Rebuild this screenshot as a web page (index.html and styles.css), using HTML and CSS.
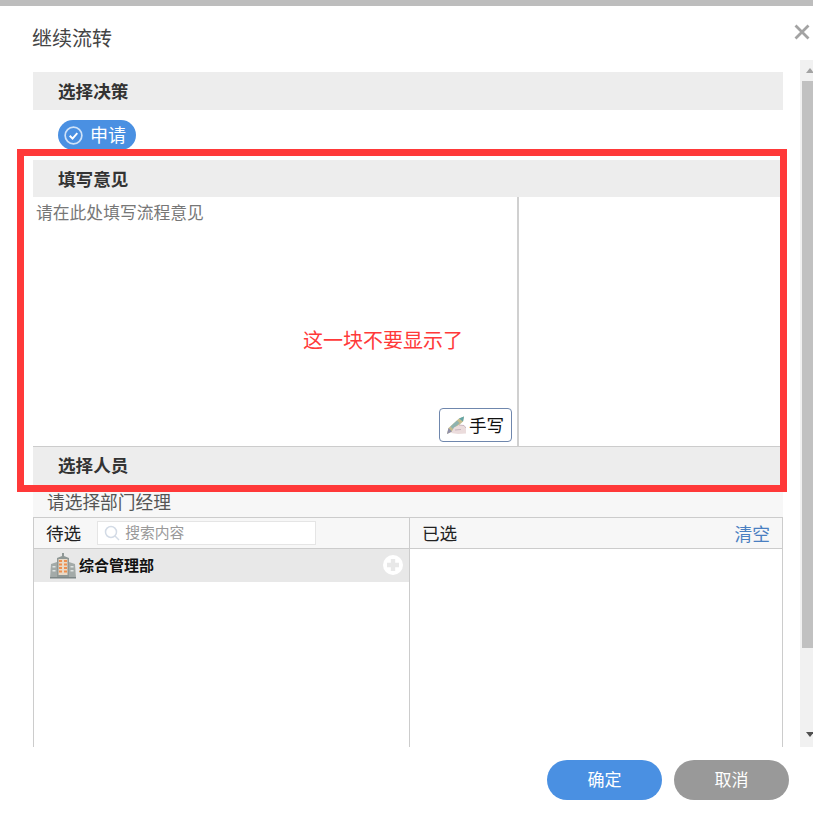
FILE: index.html
```html
<!DOCTYPE html>
<html lang="zh-CN">
<head>
<meta charset="utf-8">
<title>继续流转</title>
<link rel="stylesheet" href="styles.css">
</head>
<body>
<div class="strip"></div>
<div class="modal">
  <header class="modal-head">
    <h1 class="modal-title">继续流转</h1>
    <svg class="close" viewBox="0 0 16 16" aria-hidden="true"><path d="M1.500 1.500 L14.500 14.500 M14.500 1.500 L1.500 14.500" stroke="#a3a3a3" stroke-width="2.800" fill="none"/></svg>
  </header>
  <div class="scroll-area">
    <main class="content">
      <h2 class="bar">选择决策</h2>
      <div class="decision">
        <span class="pill">
          <svg class="pill-icon" viewBox="0 0 20 20" aria-hidden="true"><circle cx="10" cy="10" r="8.800" fill="none" stroke="#cfe2f8" stroke-width="1.800"/><path d="M6 10.300 L9 13.200 L14 7.400" fill="none" stroke="#fff" stroke-width="2"/></svg>
          <span class="pill-text">申请</span>
        </span>
      </div>
      <h2 class="bar bar-second">填写意见</h2>
      <section class="opinion">
        <div class="opinion-input">
          <span class="placeholder">请在此处填写流程意见</span>
          <button class="hand-btn" type="button">
            <svg class="hand-icon" viewBox="0 0 20 20" aria-hidden="true">
              <path d="M1 19 L2.500 13 L13 3.500 L18 1.500 L17 6.500 L6 16.500 Z" fill="#c5bd8e"/>
              <path d="M13 3.500 L18 1.500 L17 6.500 Z" fill="#62a5a8"/>
              <path d="M4.500 11.500 L11 5.500 L13.500 8 L7 14 Z" fill="#8fb3b0"/>
              <path d="M1 19 L2.500 13 L6 16.500 Z" fill="#8f8fa8"/>
              <path d="M5 18 L8 12.500 L13 10 L18 10.500 L20 13 L20 18.500 L12 19 Z" fill="#ebdcdc"/>
              <path d="M13 10 L18 10.500 L20 13 M9 15 L15 14.500" fill="none" stroke="#bfa9b5" stroke-width="0.800"/>
            </svg>
            <span>手写</span>
          </button>
        </div>
        <div class="opinion-side"></div>
      </section>
      <h2 class="bar bar-third">选择人员</h2>
      <div class="hint">请选择部门经理</div>
      <div class="picker">
        <div class="pane pane-left">
          <div class="pane-head">
            <span class="pane-label">待选</span>
            <div class="search">
              <svg class="search-icon" viewBox="0 0 16 16" aria-hidden="true"><circle cx="7" cy="7" r="5.500" fill="none" stroke="#d3dbe6" stroke-width="1.500"/><path d="M11 11 L15 15" stroke="#d3dbe6" stroke-width="1.500"/></svg>
              <span class="search-text">搜索内容</span>
            </div>
          </div>
          <div class="tree-row">
            <svg class="org-icon" viewBox="0 0 26 26" aria-hidden="true">
              <path d="M0 25 L1 11 L7 9 L7 25 Z" fill="#a3aaa8"/>
              <path d="M26 25 L25 11 L19 9 L19 25 Z" fill="#a3aaa8"/>
              <path d="M7 25 L7 5 L12 3 L12 0 L14 0 L14 3 L19 5 L19 25 Z" fill="#8f9896"/>
              <path d="M8.500 6 H17.500 V22 H8.500 Z" fill="#e9d9c6"/>
              <path d="M9 7 H12 V9 H9 Z M14 7 H17 V9 H14 Z M9 10.500 H12 V12.500 H9 Z M14 10.500 H17 V12.500 H14 Z M9 14 H12 V16 H9 Z M14 14 H17 V16 H14 Z M9 17.500 H12 V19.500 H9 Z M14 17.500 H17 V19.500 H14 Z" fill="#ee8f4e"/>
              <path d="M2.500 13 H5.500 V14.500 H2.500 Z M2.500 17 H5.500 V18.500 H2.500 Z M20.500 13 H23.500 V14.500 H20.500 Z M20.500 17 H23.500 V18.500 H20.500 Z" fill="#dfe3e2"/>
              <path d="M0 24 H26 V25.500 H0 Z" fill="#7d8686"/>
            </svg>
            <span class="tree-name">综合管理部</span>
            <svg class="plus" viewBox="0 0 20 20" aria-hidden="true"><circle cx="10" cy="10" r="10" fill="#fff"/><path d="M10 4 V16 M4 10 H16" stroke="#e8e8e8" stroke-width="4.400"/></svg>
          </div>
        </div>
        <div class="pane pane-right">
          <div class="pane-head pane-head-right">
            <span class="pane-label">已选</span>
            <a class="clear">清空</a>
          </div>
        </div>
      </div>
    </main>
    <div class="scrollbar">
      <div class="sb-arrow sb-up"></div>
      <div class="sb-thumb"></div>
      <div class="sb-arrow sb-down"></div>
    </div>
  </div>
  <footer class="actions">
    <button class="btn btn-primary" type="button">确定</button>
    <button class="btn btn-muted" type="button">取消</button>
  </footer>
  <div class="annotation">
    <span class="annotation-text">这一块不要显示了</span>
  </div>
</div>
</body>
</html>
```
FILE: styles.css
```css
* { box-sizing: border-box; }
html, body { margin: 0; padding: 0; }
body {
  width: 813px;
  height: 818px;
  overflow: hidden;
  background: #fff;
  font-family: "Noto Sans CJK SC", "Liberation Sans", sans-serif;
  color: #333;
}
.strip {
  height: 6px;
  background: #bdbdbd;
}
.modal {
  position: relative;
  height: 812px;
  background: #fff;
  border-top-left-radius: 8px;
  overflow: hidden;
}
.modal-head {
  position: relative;
  height: 54px;
  padding-left: 32px;
  display: flex;
  align-items: center;
}
.modal-title {
  margin: 0;
  font-size: 20px;
  font-weight: 400;
  line-height: 28px;
  margin-top: 10px;
  color: #444;
}
.close {
  position: absolute;
  left: 794px;
  top: 18px;
  width: 16px;
  height: 16px;
}
.scroll-area {
  display: flex;
  height: 687px;
  overflow: hidden;
}
.content {
  width: 750px;
  margin-left: 33px;
  padding-top: 12px;
  flex: none;
}
.bar {
  margin: 0;
  height: 38px;
  line-height: 38px;
  padding-left: 25px;
  background: #ededed;
  font-size: 17.600px;
  font-weight: 700;
  color: #333;
}
.bar-second { height: 37px; line-height: 38px; }
.decision {
  height: 50px;
  padding: 10px 0 0 25px;
}
.pill {
  display: inline-flex;
  align-items: center;
  width: 78px;
  height: 30px;
  padding-left: 6px;
  gap: 8px;
  border-radius: 15px;
  background: #4a90e2;
  color: #fff;
  font-size: 18px;
}
.pill-text { line-height: 28px; height: 30px; margin-left: -1px; }
.pill-icon { width: 19px; height: 19px; flex: none; }
.opinion {
  display: flex;
  height: 250px;
  border-bottom: 1px solid #ccc;
}
.opinion-input {
  position: relative;
  width: 486px;
  border-right: 2px solid #d0d0d0;
  padding: 3px 0 0 3px;
}
.placeholder {
  font-size: 16.800px;
  line-height: 24px;
  color: #777;
}
.hand-btn {
  position: absolute;
  left: 406px;
  top: 211px;
  width: 73px;
  height: 34px;
  padding: 0 0 0 6px;
  display: flex;
  align-items: center;
  gap: 3px;
  background: #fff;
  border: 1px solid #6f87ad;
  border-radius: 4px;
  font-family: inherit;
  font-size: 17.600px;
  line-height: 30px;
  color: #111;
}
.hand-icon { width: 20px; height: 20px; flex: none; }
.opinion-side { flex: 1; }
.bar-third { line-height: 36px; }
.hint {
  height: 32px;
  padding-left: 14px;
  background: #f7f7f7;
  font-size: 17.700px;
  line-height: 32px;
  color: #555;
}
.picker {
  display: flex;
  height: 230px;
  border: 1px solid #ccc;
  border-bottom: 0;
}
.pane-left {
  width: 376px;
  border-right: 1px solid #ccc;
  flex: none;
}
.pane-right { flex: 1; }
.pane-head {
  height: 31px;
  background: #f7f7f7;
  border-bottom: 1px solid #ccc;
  display: flex;
  align-items: center;
  padding-left: 12px;
}
.pane-head-right {
  justify-content: space-between;
  padding: 0 12px 0 12px;
}
.pane-label {
  font-size: 17.600px;
  color: #222;
  height: 30px;
  line-height: 30px;
}
.search {
  margin-left: 15px;
  width: 219px;
  height: 24px;
  background: #fff;
  border: 1px solid #e5e5e5;
  display: flex;
  align-items: center;
  gap: 5px;
  padding-left: 6px;
  font-size: 14.800px;
  color: #999;
}
.pane-label + .search { margin-left: 16px; }
.search-text { height: 22px; line-height: 20px; }
.search-icon { width: 16px; height: 16px; flex: none; }
.clear {
  font-size: 17.800px;
  color: #4a7fc1;
  height: 30px;
  line-height: 30px;
}
.tree-row {
  position: relative;
  height: 33px;
  background: #e8e8e8;
  display: flex;
  align-items: center;
  padding-left: 16px;
  gap: 3px;
}
.org-icon { width: 26px; height: 26px; flex: none; }
.tree-name {
  font-size: 15px;
  font-weight: 700;
  color: #111;
  height: 32px;
  line-height: 30px;
}
.plus {
  position: absolute;
  left: 349px;
  top: 6px;
  width: 20px;
  height: 20px;
}
.scrollbar {
  margin-left: 17px;
  width: 13px;
  flex: none;
  display: flex;
  flex-direction: column;
  background: #f1f1f1;
  position: relative;
}
.sb-arrow {
  flex: none;
  height: 21px;
  position: relative;
}
.sb-up::after, .sb-down::after {
  content: "";
  position: absolute;
  left: 6px;
  width: 0;
  height: 0;
  border-left: 4px solid transparent;
  border-right: 4px solid transparent;
}
.sb-up::after { top: 8px; border-bottom: 5px solid #a3a3a3; }
.sb-down {
  margin-top: auto;
}
.sb-down::after { top: 6px; border-top: 5px solid #505050; }
.sb-thumb {
  margin-left: 2px;
  width: 11px;
  height: 567px;
  background: #c1c1c1;
}
.actions {
  display: flex;
  justify-content: flex-end;
  gap: 12px;
  padding: 13px 24px 0 0;
}
.btn {
  width: 115px;
  height: 40px;
  border: 0;
  border-radius: 20px;
  color: #fff;
  font-family: inherit;
  font-size: 17px;
  line-height: 38px;
  padding: 0 0 2px;
}
.btn-primary { background: #4a90e2; }
.btn-muted { background: #999; }
.annotation {
  position: absolute;
  left: 17px;
  top: 143px;
  width: 770px;
  height: 343px;
  border: 7px solid #ff3939;
  pointer-events: none;
}
.annotation-text {
  position: absolute;
  left: 279px;
  top: 169px;
  font-size: 20px;
  line-height: 30px;
  color: #ff3939;
}
```
